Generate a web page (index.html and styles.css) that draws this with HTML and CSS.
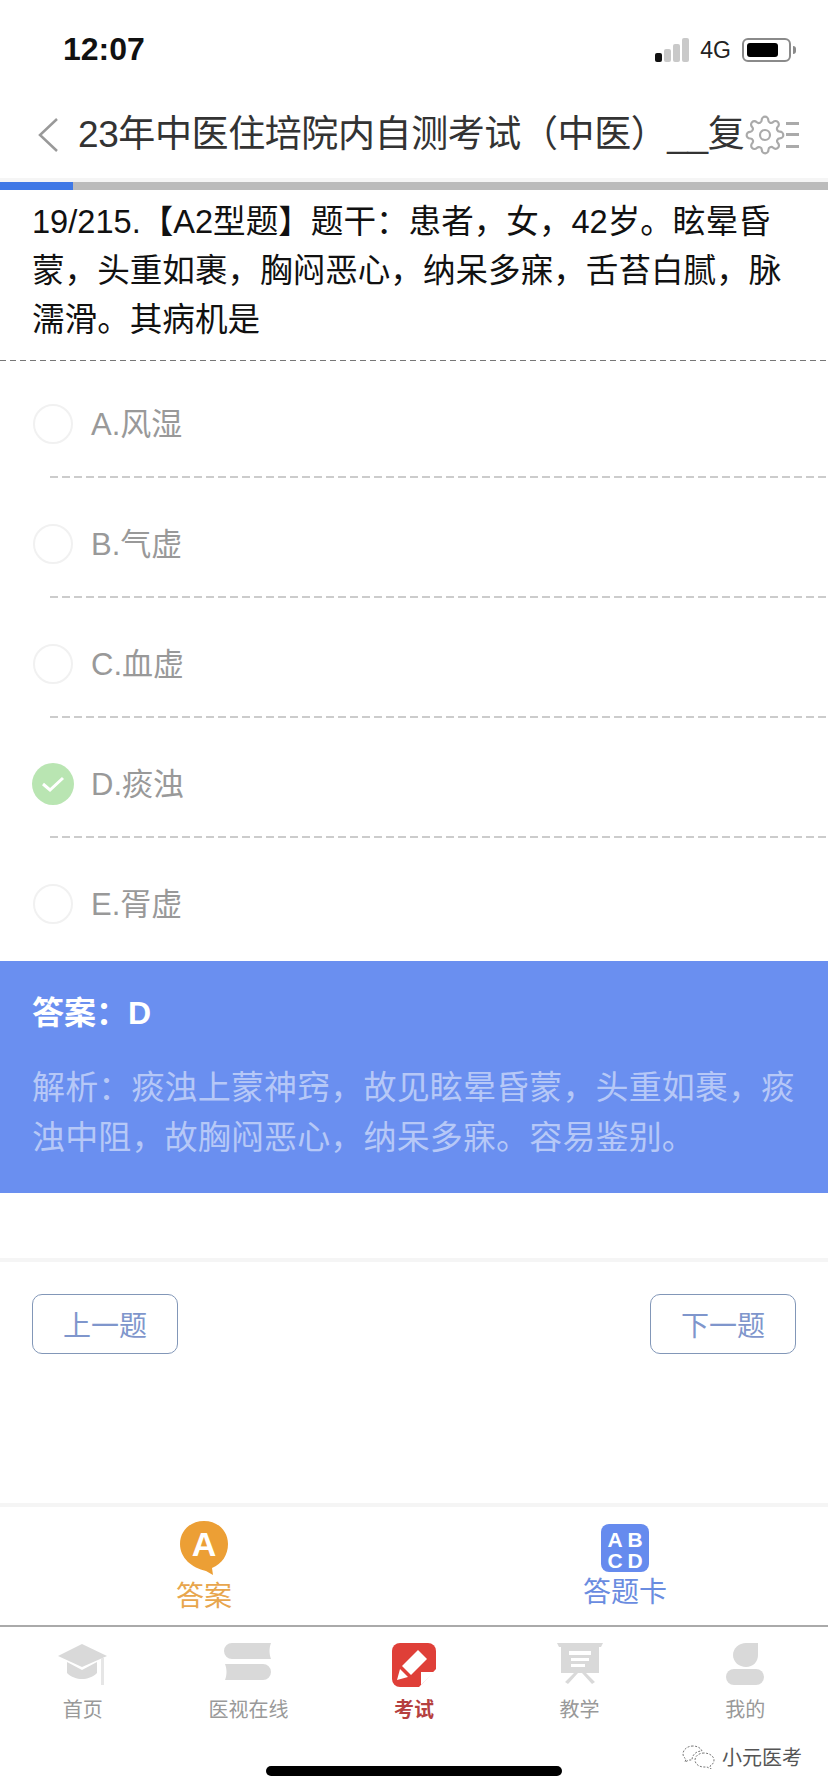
FILE: index.html
```html
<!DOCTYPE html>
<html lang="zh-CN">

<head>
    <meta charset="UTF-8">
    <meta name="viewport" content="width=device-width, initial-scale=1.0">
    <title>考试</title>
    <link rel="stylesheet" href="styles.css">
</head>

<body>
<div class="page">
    <!-- 状态栏 -->
    <div class="status">
        <span class="time">12:07</span>
        <div class="status-right">
            <div class="signal"><i class="on"></i><i></i><i></i><i></i></div>
            <span class="net">4G</span>
            <div class="battery"><i></i></div>
            <div class="battery-nub"></div>
        </div>
    </div>

    <!-- 标题栏 -->
    <div class="nav">
        <svg class="back" width="22" height="36" viewBox="0 0 22 36"><path d="M20 2 3 18l17 16" fill="none" stroke="#999" stroke-width="2.5"/></svg>
        <div class="nav-title">23年中医住培院内自测考试（中医）__复</div>
        <svg class="gear" width="40" height="40" viewBox="0 0 24 24" fill="none" stroke="#aaa" stroke-width="1.3">
            <circle cx="12" cy="12" r="3"/>
            <path d="M19.4 15a1.65 1.65 0 0 0 .33 1.82l.06.06a2 2 0 0 1 0 2.83 2 2 0 0 1-2.83 0l-.06-.06a1.65 1.65 0 0 0-1.82-.33 1.65 1.65 0 0 0-1 1.51V21a2 2 0 0 1-2 2 2 2 0 0 1-2-2v-.09A1.65 1.65 0 0 0 9 19.4a1.65 1.65 0 0 0-1.82.33l-.06.06a2 2 0 0 1-2.83 0 2 2 0 0 1 0-2.83l.06-.06a1.65 1.65 0 0 0 .33-1.82 1.65 1.65 0 0 0-1.51-1H3a2 2 0 0 1-2-2 2 2 0 0 1 2-2h.09A1.65 1.65 0 0 0 4.6 9a1.65 1.65 0 0 0-.33-1.82l-.06-.06a2 2 0 0 1 0-2.83 2 2 0 0 1 2.83 0l.06.06a1.65 1.65 0 0 0 1.82.33H9a1.65 1.65 0 0 0 1-1.51V3a2 2 0 0 1 2-2 2 2 0 0 1 2 2v.09a1.65 1.65 0 0 0 1 1.51 1.65 1.65 0 0 0 1.82-.33l.06-.06a2 2 0 0 1 2.83 0 2 2 0 0 1 0 2.83l-.06.06a1.65 1.65 0 0 0-.33 1.82V9a1.65 1.65 0 0 0 1.51 1H21a2 2 0 0 1 2 2 2 2 0 0 1-2 2h-.09a1.65 1.65 0 0 0-1.51 1z"/>
        </svg>
        <div class="menu-lines"><i></i><i></i><i></i></div>
    </div>

    <!-- 进度条 -->
    <div class="progress"><div class="progress-on"></div></div>

    <!-- 题干 -->
    <div class="question">19/215.【A2型题】题干：患者，女，42岁。眩晕昏蒙，头重如裹，胸闷恶心，纳呆多寐，舌苔白腻，脉濡滑。其病机是</div>

    <!-- 选项 -->
    <div class="options">
        <div class="option"><span class="radio"></span><span>A.风湿</span></div>
        <div class="option"><span class="radio"></span><span>B.气虚</span></div>
        <div class="option"><span class="radio"></span><span>C.血虚</span></div>
        <div class="option">
            <span class="radio radio-on">
                <svg width="26" height="20" viewBox="0 0 26 20"><path d="M3 10l7 6L23 4" fill="none" stroke="#fff" stroke-width="3"/></svg>
            </span>
            <span>D.痰浊</span>
        </div>
        <div class="option"><span class="radio"></span><span>E.胥虚</span></div>
    </div>

    <!-- 答案解析 -->
    <div class="answer">
        <div class="answer-title">答案：D</div>
        <div class="answer-text">解析：痰浊上蒙神窍，故见眩晕昏蒙，头重如裹，痰浊中阻，故胸闷恶心，纳呆多寐。容易鉴别。</div>
    </div>

    <!-- 翻页 -->
    <div class="pager">
        <button class="pager-btn">上一题</button>
        <button class="pager-btn">下一题</button>
    </div>

    <!-- 答案 / 答题卡 -->
    <div class="actions">
        <div class="action action-answer">
            <svg width="50" height="56" viewBox="0 0 50 56">
                <path d="M25 1C11 1 1 11 1 24c0 14 12 24 26 27l7 4-1-7c10-4 16-13 16-24C49 11 39 1 25 1z" fill="#ec9f35"/>
                <text x="25" y="36" text-anchor="middle" class="bubble-letter">A</text>
            </svg>
            <span>答案</span>
        </div>
        <div class="action action-card">
            <div class="card-icon"><span>A</span><span>B</span><span>C</span><span>D</span></div>
            <span>答题卡</span>
        </div>
    </div>

    <!-- 底部导航 -->
    <div class="tabs">
        <div class="tab">
            <svg width="52" height="42" viewBox="0 0 52 42" fill="#d9d9d9">
                <path d="M1 13 25 1l25 12-25 11z"/>
                <path d="M10 19l15 8 15-8v11c-4 4-10 6-15 6s-11-2-15-6z"/>
                <path d="M44 15h3v27h-3z" fill="#e6e6e6"/>
            </svg>
            <span>首页</span>
        </div>
        <div class="tab">
            <svg width="48" height="38" viewBox="0 0 48 38" fill="#d9d9d9">
                <path d="M8 0h39c-2 5-2 11 0 16H8A8 8 0 0 1 8 0z"/>
                <path d="M1 21h38a8 8 0 0 1 0 16H1c2-5 2-11 0-16z"/>
            </svg>
            <span>医视在线</span>
        </div>
        <div class="tab tab-on">
            <svg width="44" height="44" viewBox="0 0 44 44">
                <path d="M8 0h28a8 8 0 0 1 8 8v18L27 44H8a8 8 0 0 1-8-8V8a8 8 0 0 1 8-8z" fill="#df3f38"/>
                <path d="M26 7l9 9-16 16-9-9z" fill="#fff"/>
                <path d="M8 26l8 8-11 3z" fill="#fff"/>
                <path d="M29 42V29h13z" fill="#fff"/>
            </svg>
            <span>考试</span>
        </div>
        <div class="tab">
            <svg width="46" height="42" viewBox="0 0 46 42">
                <path d="M0 0h46l-2 4H2z" fill="#d9d9d9"/>
                <path d="M4 4h38v26H4z" fill="#d9d9d9"/>
                <path d="M21 30 11 41l-3-2 9-9zM25 30l10 11 3-2-9-9z" fill="#d9d9d9"/>
                <path d="M12 8h22v4H12zM14 15h18v3H14zM14 21h14v3H14z" fill="#fff"/>
            </svg>
            <span>教学</span>
        </div>
        <div class="tab">
            <svg width="38" height="42" viewBox="0 0 38 42" fill="#d9d9d9">
                <path d="M32 0v12c0 7-5 12-12 12S7 19 7 12 13 0 20 0z"/>
                <rect x="0" y="26" width="38" height="16" rx="8"/>
            </svg>
            <span>我的</span>
        </div>
    </div>

    <div class="home-bar"></div>

    <!-- 水印 -->
    <div class="mark">
        <svg width="34" height="24" viewBox="0 0 34 24" fill="#fff" stroke="#777" stroke-width="1" stroke-dasharray="2 1.5">
            <path d="M11 1C5 1 1 5 1 9c0 2 1 4 3 5l-1 3 4-2h3c0-5 4-9 10-9-1-3-5-5-9-5z"/>
            <path d="M22 8c-5 0-9 3-9 7s4 7 9 7h3l4 2-1-3c2-1 4-3 4-6 0-4-5-7-10-7z"/>
        </svg>
        <span>小元医考</span>
    </div>
</div>
</body>

</html>
```

FILE: styles.css
```css
* {
    padding: 0;
    margin: 0;
    box-sizing: border-box;
}

body {
    background-color: #fff;
    font-family: "Liberation Sans", "Noto Sans CJK SC", sans-serif;
}

.page {
    position: relative;
    width: 828px;
    height: 1792px;
    overflow: hidden;
    background-color: #fff;
}

/* 状态栏 */
.status {
    height: 100px;
    padding: 31px 32px 0 63px;
    display: flex;
    justify-content: space-between;
    align-items: flex-start;
}

.time {
    font-size: 32px;
    font-weight: bold;
    line-height: 37px;
    color: #111;
}

.status-right {
    display: flex;
    align-items: center;
    height: 36px;
    margin-top: 1px;
}

.signal {
    display: flex;
    align-items: flex-end;
    gap: 2px;
    height: 24px;
    margin-right: 11px;
}

.signal i {
    display: block;
    width: 7px;
    border-radius: 2px;
    background-color: #c9c9c9;
}

.signal i:nth-child(1) { height: 9px; background-color: #111; }
.signal i:nth-child(2) { height: 13px; }
.signal i:nth-child(3) { height: 18px; }
.signal i:nth-child(4) { height: 24px; }

.net {
    font-size: 23px;
    color: #222;
    margin-right: 11px;
}

.battery {
    width: 49px;
    height: 24px;
    padding: 3px;
    border: 2px solid #8a8a8a;
    border-radius: 6px;
}

.battery i {
    display: block;
    width: 31px;
    height: 100%;
    border-radius: 3px;
    background-color: #000;
}

.battery-nub {
    width: 3px;
    height: 8px;
    margin-left: 2px;
    border-radius: 0 3px 3px 0;
    background-color: #8a8a8a;
}

/* 标题栏 */
.nav {
    height: 78px;
    padding: 0 0 9px 37px;
    display: flex;
    align-items: center;
}

.back {
    flex: none;
    margin-right: 19px;
}

.nav-title {
    width: 667px;
    white-space: nowrap;
    font-size: 37px;
    letter-spacing: -0.4px;
    line-height: 50px;
    color: #333;
}

.gear {
    flex: none;
}

.menu-lines {
    width: 13px;
    height: 26px;
    display: flex;
    flex-direction: column;
    justify-content: space-between;
    margin-left: 1px;
}

.menu-lines i {
    display: block;
    height: 3px;
    background-color: #aaa;
}

/* 进度条 */
.progress {
    height: 12px;
    border-top: 4px solid #f5f5f5;
    background-color: #bbb;
}

.progress-on {
    width: 73px;
    height: 100%;
    background-color: #3f78e6;
}

/* 题干 */
.question {
    height: 171px;
    padding: 7px 38px 0 32px;
    background: repeating-linear-gradient(to right, #777 0 6px, transparent 6px 10px) left bottom / 100% 1.5px no-repeat;
    font-size: 32.6px;
    line-height: 49px;
    color: #111;
}

/* 选项 */
.option {
    height: 120px;
    margin-left: 50px;
    padding-top: 12px;
    display: flex;
    align-items: center;
    gap: 18px;
    background: repeating-linear-gradient(to right, #ccc 0 8px, transparent 8px 12px) left bottom / 100% 2px no-repeat;
    font-size: 31px;
    color: #999;
}

.option span:last-child {
    margin-bottom: 5px;
}

.option:first-child {
    height: 117px;
    padding-top: 8px;
}

.option:last-child {
    height: 119px;
    background: none;
}

.radio {
    width: 40px;
    height: 40px;
    margin-left: -17px;
    flex: none;
    display: flex;
    align-items: center;
    justify-content: center;
    border: 2px solid #f1f1f1;
    border-radius: 50%;
}

.radio-on {
    width: 42px;
    height: 42px;
    margin-left: -18px;
    margin-right: -1px;
    border: none;
    background-color: #b9e5b2;
}

/* 答案解析 */
.answer {
    height: 232px;
    margin-top: 4px;
    padding: 31px 32px 0;
    background-color: #6a8ff0;
}

.answer-title {
    font-size: 32px;
    font-weight: bold;
    line-height: 42px;
    color: #fff;
}

.answer-text {
    margin-top: 29px;
    font-size: 33px;
    letter-spacing: 0.15px;
    line-height: 50px;
    color: #b6c8f7;
}

/* 翻页 */
.pager {
    height: 245px;
    margin-top: 65px;
    padding: 32px 32px 0;
    display: flex;
    justify-content: space-between;
    align-items: flex-start;
    border-top: 4px solid #f5f5f5;
}

.pager-btn {
    width: 146px;
    height: 60px;
    border: 1px solid #8297b8;
    border-radius: 10px;
    background-color: #fff;
    font-family: inherit;
    font-size: 28px;
    color: #7f96cc;
}

/* 答案 / 答题卡 */
.actions {
    height: 124px;
    display: flex;
    border-top: 4px solid #f5f5f5;
    border-bottom: 2px solid #aaa;
}

.action {
    display: flex;
    flex-direction: column;
    align-items: center;
    font-size: 28px;
    line-height: 34px;
}

.action-answer {
    width: 408px;
    padding-top: 13px;
    color: #e8a64d;
}

.action-answer svg {
    margin-bottom: 4px;
}

.bubble-letter {
    font-size: 34px;
    font-weight: bold;
    fill: #fff;
}

.action-card {
    flex: 1;
    padding: 17px 0 0 14px;
    color: #6a8ce0;
}

.card-icon {
    width: 48px;
    height: 48px;
    margin-bottom: 4px;
    display: grid;
    grid-template-columns: 1fr 1fr;
    padding: 6px 4px 0;
    border-radius: 8px;
    background-color: #668bee;
    font-size: 21px;
    font-weight: bold;
    line-height: 19px;
    text-align: center;
    color: #fff;
}

/* 底部导航 */
.tabs {
    display: grid;
    grid-template-columns: repeat(5, 1fr);
    padding-top: 16px;
}

.tab {
    height: 81px;
    display: flex;
    flex-direction: column;
    align-items: center;
    justify-content: flex-end;
    font-size: 20px;
    line-height: 28px;
    color: #999;
}

.tab svg {
    margin-bottom: auto;
}

.tab-on {
    color: #b5403f;
    font-weight: bold;
}

.home-bar {
    width: 296px;
    height: 10px;
    margin: 42px auto 0;
    border-radius: 5px;
    background-color: #000;
}

/* 水印 */
.mark {
    position: absolute;
    left: 682px;
    top: 1742px;
    display: flex;
    align-items: center;
    gap: 6px;
    font-size: 20px;
    color: #555;
}
```
